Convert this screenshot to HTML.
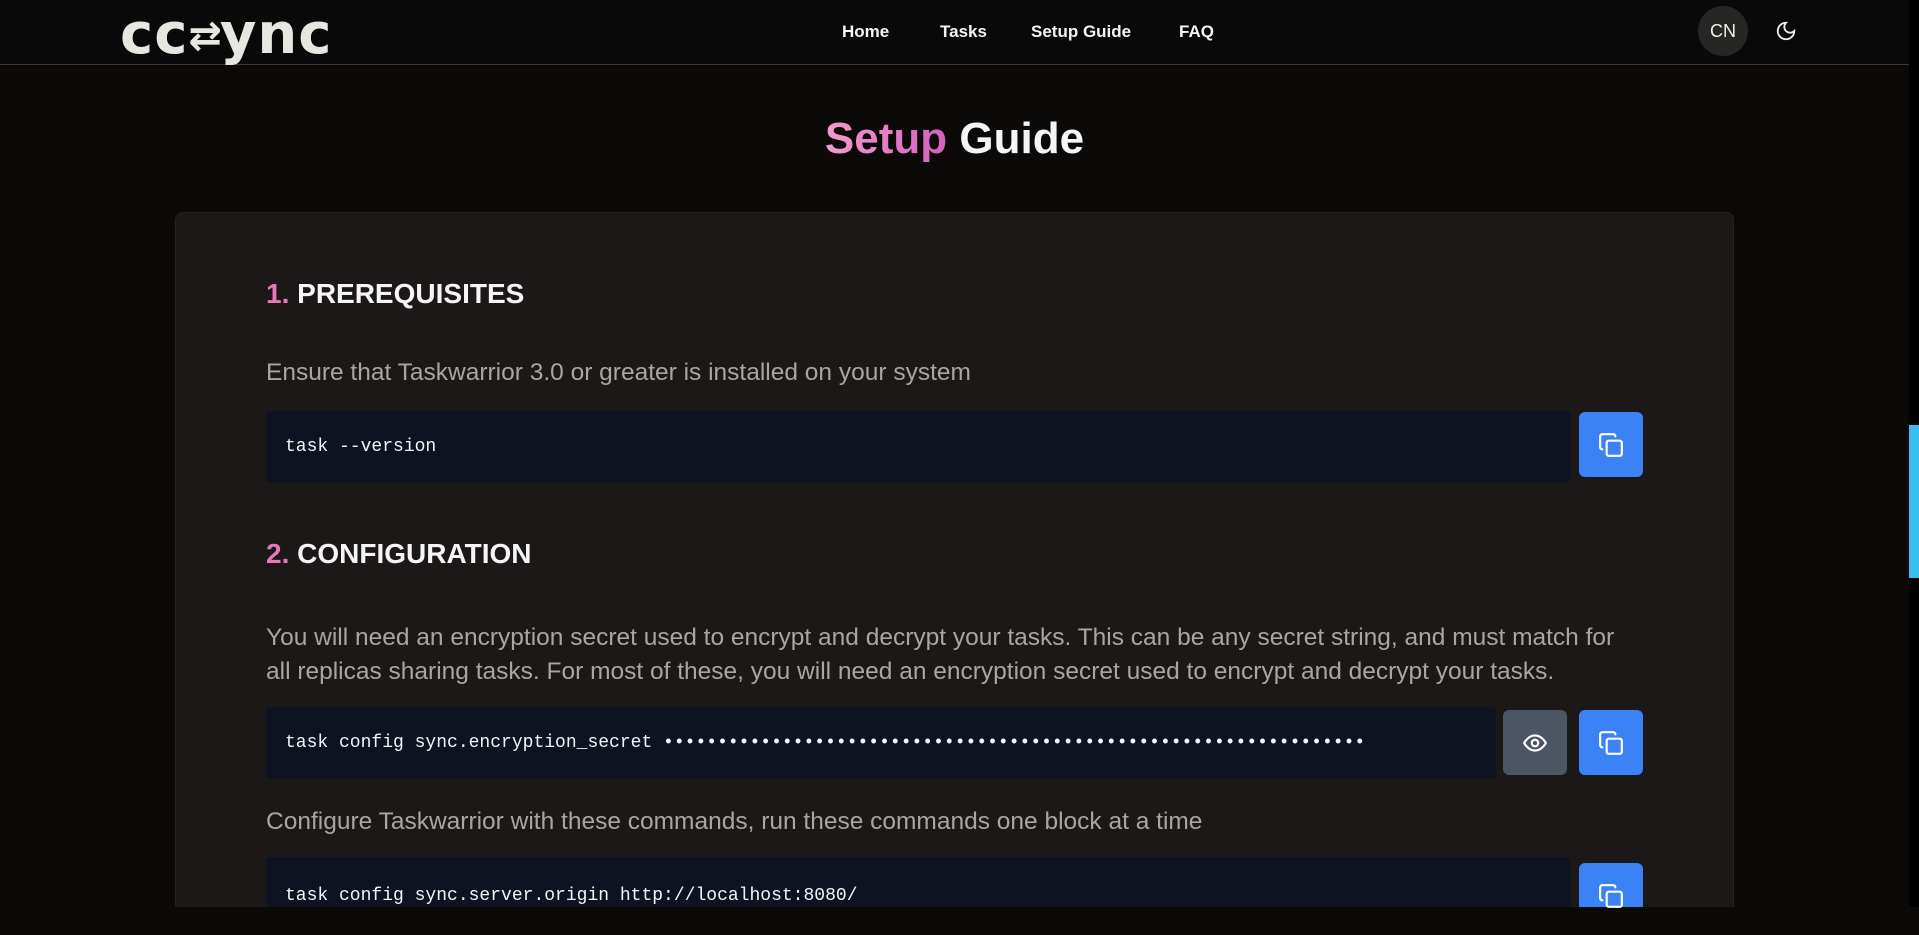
<!DOCTYPE html>
<html><head><meta charset="utf-8"><style>
*{box-sizing:border-box;margin:0;padding:0}
html,body{width:1919px;height:907px;overflow:hidden;background:#0b0a09;font-family:"Liberation Sans",sans-serif}
.nav{position:absolute;left:0;top:0;width:1909px;height:65px;background:#0a0909;border-bottom:1px solid #3a3835}
.logo{position:absolute;left:120px;top:2px;font-size:56px;font-weight:bold;color:#e8e6e0;letter-spacing:1px;font-family:"DejaVu Sans",sans-serif}
.links a{position:absolute;top:22px;font-size:17px;font-weight:bold;color:#f5f5f5;text-decoration:none}
.cn{position:absolute;left:1698px;top:6px;width:50px;height:50px;border-radius:50%;background:#272624;color:#eee;font-size:18px;text-align:center;line-height:50px}
.moon{position:absolute;left:1775px;top:20px}
h1{position:absolute;top:114px;left:0;width:1909px;text-align:center;font-size:44px;font-weight:bold;color:#f5f5f5}
.pink{background:linear-gradient(90deg,#f29ccb,#d45fc0);-webkit-background-clip:text;color:transparent}
.card{position:absolute;left:175px;top:212px;width:1559px;height:695px;background:#1b1817;border:1px solid #26221f;border-bottom:none;border-radius:8px 8px 0 0}
.h2{position:absolute;left:266px;font-size:28px;font-weight:bold;color:#f5f5f5}
.h2 span{color:#e879b9}
.p{position:absolute;left:266px;font-size:24.5px;color:#a8a6a3;line-height:34px;white-space:nowrap}
.code{position:absolute;left:266px;width:1304px;height:72px;background:#0e1322;border-radius:4px;font-family:"Liberation Mono",monospace;font-size:18px;color:#f3f4f6;padding-left:19px;line-height:72px;white-space:nowrap}
.btn{position:absolute;width:64px;height:65px;border-radius:6px;background:#3b82f6;display:flex;align-items:center;justify-content:center}
.gray{background:#4b5563}
.sb{position:absolute;left:1909px;top:0;width:10px;height:907px;background:#000}
.thumb{position:absolute;left:1909px;top:425px;width:10px;height:153px;background:#3bbdf0}
</style></head><body>
<div class="nav">
<div class="logo">cc<span style="font-size:40px;vertical-align:4px;letter-spacing:-2px">⇄</span>ync</div>
<div class="links"><a style="left:842px">Home</a><a style="left:940px">Tasks</a><a style="left:1031px">Setup Guide</a><a style="left:1179px">FAQ</a></div>
<div class="cn">CN</div>
<svg class="moon" width="22" height="22" viewBox="0 0 24 24" fill="none" stroke="#eee" stroke-width="2" stroke-linecap="round"><path d="M12 3a6 6 0 0 0 9 9 9 9 0 1 1-9-9Z"/></svg>
</div>
<h1><span class="pink">Setup</span> Guide</h1>
<div class="card"></div>
<div class="h2" style="top:278px"><span>1.</span> PREREQUISITES</div>
<div class="p" style="top:356px">Ensure that Taskwarrior 3.0 or greater is installed on your system</div>
<div class="code" style="top:411px">task --version</div>
<div class="btn" style="left:1579px;top:412px"><svg width="26" height="26" viewBox="0 0 24 24" fill="none" stroke="#fff" stroke-width="2" stroke-linecap="round"><rect x="8" y="8" width="14" height="14" rx="2"/><path d="M4 16c-1.1 0-2-.9-2-2V4c0-1.1.9-2 2-2h10c1.1 0 2 .9 2 2"/></svg></div>
<div class="h2" style="top:538px"><span>2.</span> CONFIGURATION</div>
<div class="p" style="top:621px">You will need an encryption secret used to encrypt and decrypt your tasks. This can be any secret string, and must match for<br>all replicas sharing tasks. For most of these, you will need an encryption secret used to encrypt and decrypt your tasks.</div>
<div class="code" style="top:707px;width:1230px">task config sync.encryption_secret •••••••••••••••••••••••••••••••••••••••••••••••••••••••••••••••••</div>
<div class="btn gray" style="left:1503px;top:710px"><svg width="26" height="26" viewBox="0 0 24 24" fill="none" stroke="#fff" stroke-width="2"><path d="M2 12s3.5-7 10-7 10 7 10 7-3.5 7-10 7S2 12 2 12Z"/><circle cx="12" cy="12" r="3"/></svg></div>
<div class="btn" style="left:1579px;top:710px"><svg width="26" height="26" viewBox="0 0 24 24" fill="none" stroke="#fff" stroke-width="2" stroke-linecap="round"><rect x="8" y="8" width="14" height="14" rx="2"/><path d="M4 16c-1.1 0-2-.9-2-2V4c0-1.1.9-2 2-2h10c1.1 0 2 .9 2 2"/></svg></div>
<div class="p" style="top:805px">Configure Taskwarrior with these commands, run these commands one block at a time</div>
<div class="code" style="top:857px;line-height:78px;height:50px;border-radius:4px 4px 0 0">task config sync.server.origin http://localhost:8080/</div>
<div class="btn" style="left:1579px;top:863px;height:44px;border-radius:6px 6px 0 0;align-items:flex-start;padding-top:20px"><svg width="26" height="26" viewBox="0 0 24 24" fill="none" stroke="#fff" stroke-width="2" stroke-linecap="round"><rect x="8" y="8" width="14" height="14" rx="2"/><path d="M4 16c-1.1 0-2-.9-2-2V4c0-1.1.9-2 2-2h10c1.1 0 2 .9 2 2"/></svg></div>
<div class="sb"></div><div class="thumb"></div>
</body></html>
